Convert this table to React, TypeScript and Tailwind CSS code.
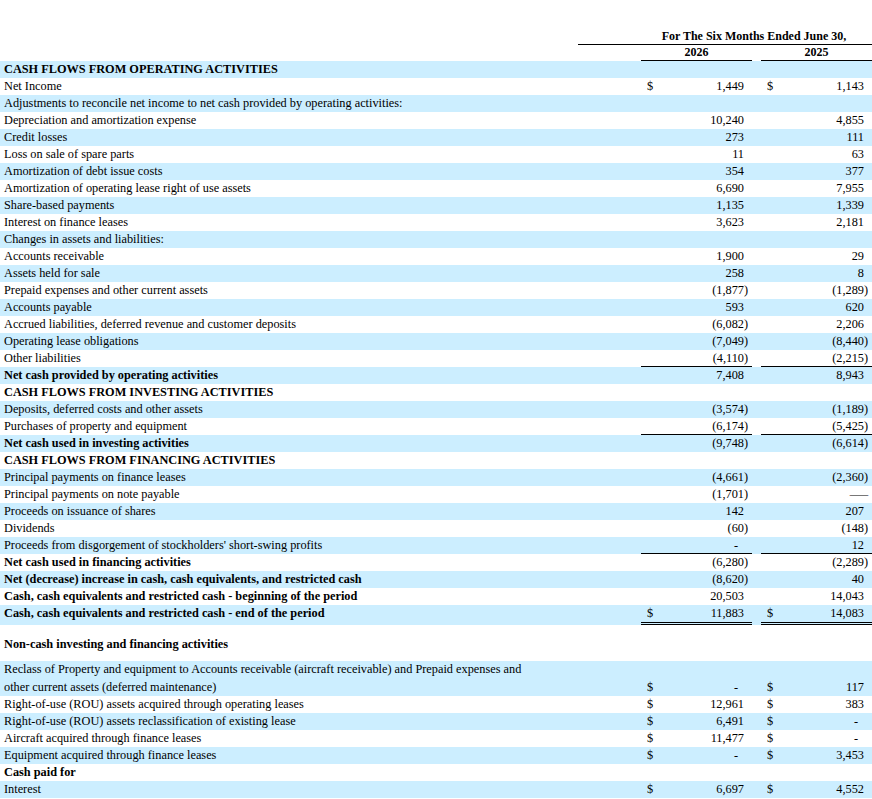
import React from "react";

type Line = "single" | "double";

type Row = {
  label: React.ReactNode;
  bold?: boolean;
  a?: string;
  b?: string;
  dollarA?: boolean;
  dollarB?: boolean;
  line?: Line;
  tall?: boolean;
};

const BLUE = "bg-[#CCEEFF]";
const COLS = "grid grid-cols-[578px_63px_111px_9px_111px]";

const cashFlows: Row[] = [
  { label: "CASH FLOWS FROM OPERATING ACTIVITIES", bold: true },
  { label: "Net Income", a: "1,449", b: "1,143", dollarA: true, dollarB: true },
  { label: "Adjustments to reconcile net income to net cash provided by operating activities:" },
  { label: "Depreciation and amortization expense", a: "10,240", b: "4,855" },
  { label: "Credit losses", a: "273", b: "111" },
  { label: "Loss on sale of spare parts", a: "11", b: "63" },
  { label: "Amortization of debt issue costs", a: "354", b: "377" },
  { label: "Amortization of operating lease right of use assets", a: "6,690", b: "7,955" },
  { label: "Share-based payments", a: "1,135", b: "1,339" },
  { label: "Interest on finance leases", a: "3,623", b: "2,181" },
  { label: "Changes in assets and liabilities:" },
  { label: "Accounts receivable", a: "1,900", b: "29" },
  { label: "Assets held for sale", a: "258", b: "8" },
  { label: "Prepaid expenses and other current assets", a: "(1,877)", b: "(1,289)" },
  { label: "Accounts payable", a: "593", b: "620" },
  { label: "Accrued liabilities, deferred revenue and customer deposits", a: "(6,082)", b: "2,206" },
  { label: "Operating lease obligations", a: "(7,049)", b: "(8,440)" },
  { label: "Other liabilities", a: "(4,110)", b: "(2,215)", line: "single" },
  { label: "Net cash provided by operating activities", bold: true, a: "7,408", b: "8,943" },
  { label: "CASH FLOWS FROM INVESTING ACTIVITIES", bold: true },
  { label: "Deposits, deferred costs and other assets", a: "(3,574)", b: "(1,189)" },
  { label: "Purchases of property and equipment", a: "(6,174)", b: "(5,425)", line: "single" },
  { label: "Net cash used in investing activities", bold: true, a: "(9,748)", b: "(6,614)" },
  { label: "CASH FLOWS FROM FINANCING ACTIVITIES", bold: true },
  { label: "Principal payments on finance leases", a: "(4,661)", b: "(2,360)" },
  { label: "Principal payments on note payable", a: "(1,701)", b: "—" },
  { label: "Proceeds on issuance of shares", a: "142", b: "207" },
  { label: "Dividends", a: "(60)", b: "(148)" },
  {
    label: "Proceeds from disgorgement of stockholders' short-swing profits",
    a: "-",
    b: "12",
    line: "single",
  },
  { label: "Net cash used in financing activities", bold: true, a: "(6,280)", b: "(2,289)" },
  {
    label: "Net (decrease) increase in cash, cash equivalents, and restricted cash",
    bold: true,
    a: "(8,620)",
    b: "40",
  },
  {
    label: "Cash, cash equivalents and restricted cash - beginning of the period",
    bold: true,
    a: "20,503",
    b: "14,043",
  },
  {
    label: "Cash, cash equivalents and restricted cash - end of the period",
    bold: true,
    a: "11,883",
    b: "14,083",
    dollarA: true,
    dollarB: true,
    line: "double",
  },
];

const nonCash: Row[] = [
  {
    label: (
      <>
        Reclass of Property and equipment to Accounts receivable (aircraft receivable) and Prepaid expenses and
        <br />
        other current assets (deferred maintenance)
      </>
    ),
    a: "-",
    b: "117",
    dollarA: true,
    dollarB: true,
    tall: true,
  },
  { label: "Right-of-use (ROU) assets acquired through operating leases", a: "12,961", b: "383", dollarA: true, dollarB: true },
  { label: "Right-of-use (ROU) assets reclassification of existing lease", a: "6,491", b: "-", dollarA: true, dollarB: true },
  { label: "Aircraft acquired through finance leases", a: "11,477", b: "-", dollarA: true, dollarB: true },
  { label: "Equipment acquired through finance leases", a: "-", b: "3,453", dollarA: true, dollarB: true },
  { label: "Cash paid for", bold: true },
  { label: "Interest", a: "6,697", b: "4,552", dollarA: true, dollarB: true },
];

function Amount({ value }: { value: string }) {
  if (value === "-") return <span className="mr-[10px]">-</span>;
  if (value === "—") return <span className="scale-x-150 origin-right">—</span>;
  const neg = value.startsWith("(");
  return (
    <span className="flex">
      <span>{neg ? value.slice(0, -1) : value}</span>
      <span className="inline-block w-[4px]">{neg ? ")" : ""}</span>
    </span>
  );
}

function ValueCell({ value, dollar, line }: { value?: string; dollar?: boolean; line?: Line }) {
  const lineCls =
    line === "single"
      ? "shadow-[inset_0_-1px_0_#000]"
      : line === "double"
        ? "border-b-[3px] border-double border-black"
        : "";
  return (
    <div className={`flex items-end justify-between pl-[6px] pr-[4px] ${lineCls}`}>
      <span>{dollar ? "$" : ""}</span>
      {value ? <Amount value={value} /> : <span />}
    </div>
  );
}

function TableRow({ row, shaded }: { row: Row; shaded: boolean }) {
  return (
    <div className={`${COLS} ${shaded ? BLUE : ""} ${row.tall ? "leading-[17.5px]" : "leading-[17px]"}`}>
      <div className={`pl-[4px] whitespace-nowrap ${row.bold ? "font-bold" : ""}`}>{row.label}</div>
      <div />
      <ValueCell value={row.a} dollar={row.dollarA} line={row.line} />
      <div />
      <ValueCell value={row.b} dollar={row.dollarB} line={row.line} />
    </div>
  );
}

export default function App() {
  return (
    <div className="w-[872px] h-[799px] overflow-hidden bg-white text-black text-[12.3px] font-['Liberation_Serif','Times_New_Roman',serif]">
      <div className="pt-[28px] text-[12px]">
        <div className="grid grid-cols-[578px_294px]">
          <div />
          <div className="h-[17px] leading-[16px] border-b border-black pl-[58px] text-center font-bold">
            For The Six Months Ended June 30,
          </div>
        </div>
        <div className="grid grid-cols-[641px_111px_9px_111px] font-bold">
          <div />
          <div className="h-[16px] leading-[15px] border-b border-black text-center">2026</div>
          <div />
          <div className="h-[16px] leading-[15px] border-b border-black text-center">2025</div>
        </div>
      </div>

      {cashFlows.map((row, i) => (
        <TableRow key={i} row={row} shaded={i % 2 === 0} />
      ))}

      <div className="h-[11px]" />
      <div className="h-[17px] leading-[17px] pl-[4px] font-bold">Non-cash investing and financing activities</div>
      <div className="h-[8px]" />

      {nonCash.map((row, i) => (
        <TableRow key={i} row={row} shaded={i % 2 === 0} />
      ))}
    </div>
  );
}
